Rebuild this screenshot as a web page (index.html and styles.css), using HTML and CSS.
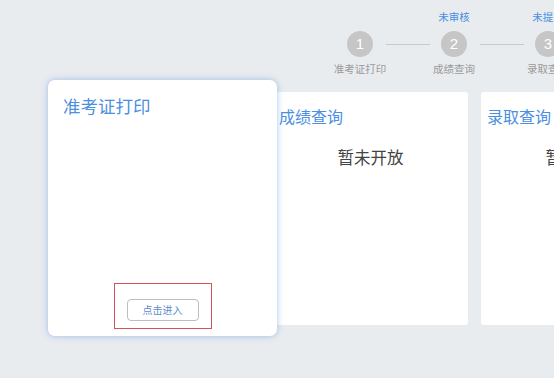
FILE: index.html
```html
<!DOCTYPE html>
<html lang="zh">
<head>
  <meta charset="UTF-8">
  <title>考试服务</title>
  <link rel="stylesheet" href="styles.css">
</head>
<body>
  <div class="steps">
    <div class="step-row status-row">
      <span class="cell"></span>
      <span class="cell">未审核</span>
      <span class="cell">未提交</span>
    </div>
    <div class="circle-row">
      <span class="circle">1</span>
      <span class="line"></span>
      <span class="circle">2</span>
      <span class="line"></span>
      <span class="circle">3</span>
    </div>
    <div class="step-row label-row">
      <span class="cell">准考证打印</span>
      <span class="cell">成绩查询</span>
      <span class="cell">录取查询</span>
    </div>
  </div>

  <div class="cards">
    <div class="card active">
      <h3 class="card-title">准考证打印</h3>
      <div class="enter-box">
        <button class="enter-btn">点击进入</button>
      </div>
    </div>
    <div class="card second">
      <h3 class="card-title">成绩查询</h3>
      <p class="closed">暂未开放</p>
    </div>
    <div class="card third">
      <h3 class="card-title">录取查询</h3>
      <p class="closed">暂未开放</p>
    </div>
  </div>
</body>
</html>
```

FILE: styles.css
```css
html, body { margin: 0; height: 100%; }
body { font-family: "Noto Sans CJK SC", "Noto Sans", sans-serif; background: #e9ecef; color: #444; overflow: hidden; width: 554px; }

.steps { margin-left: 313px; padding-top: 10px; width: 400px; }
.step-row { display: flex; }
.step-row .cell { width: 94px; flex: none; text-align: center; font-size: 10.5px; line-height: 14px; height: 14px; white-space: nowrap; }
.status-row .cell { color: #4a8fe0; }
.label-row { margin-top: 5px; }
.label-row .cell { color: #9a9a9a; }
.circle-row { display: flex; align-items: center; padding-left: 34px; margin-top: 7px; }
.circle { width: 26px; height: 26px; flex: none; border-radius: 50%; background: #c6c6c6; color: #fff; font-size: 15px; line-height: 26px; text-align: center; font-family: "Liberation Sans", sans-serif; }
.line { width: 44px; height: 1px; background: #c9c9c9; margin: 0 11px 0 13px; flex: none; }

.cards { display: flex; align-items: center; margin-top: 4px; padding-left: 48px; width: 700px; }
.card { background: #fff; flex: none; box-sizing: border-box; }
.card-title { margin: 0; font-weight: normal; color: #4a8fe0; }
.active { width: 229px; height: 256px; border-radius: 7px; padding: 14px 15px 7px; box-shadow: 0 0 6px rgba(90, 150, 225, 0.55); position: relative; z-index: 1; display: flex; flex-direction: column; }
.active .card-title { font-size: 17.5px; line-height: 24px; }
.second, .third { width: 195px; height: 233px; border-radius: 3px; padding: 14px 6px; }
.second { margin-left: -4px; }
.third { margin-left: 13px; }
.second .card-title, .third .card-title { font-size: 16px; line-height: 20px; }
.closed { margin: 20px 0 0; text-align: center; font-size: 16.5px; line-height: 22px; color: #444; }

.enter-box { margin: auto auto 0; width: 98px; height: 46px; box-sizing: border-box; border: 1px solid #d2555a; padding-top: 15px; display: flex; justify-content: center; align-items: flex-start; }
.enter-btn { width: 72px; height: 22px; padding: 0; border: 1px solid #bdbdbd; border-radius: 4px; background: #fff; color: #5b8ad0; font-size: 10px; font-family: "Noto Sans CJK SC", sans-serif; line-height: 20px; }
```
